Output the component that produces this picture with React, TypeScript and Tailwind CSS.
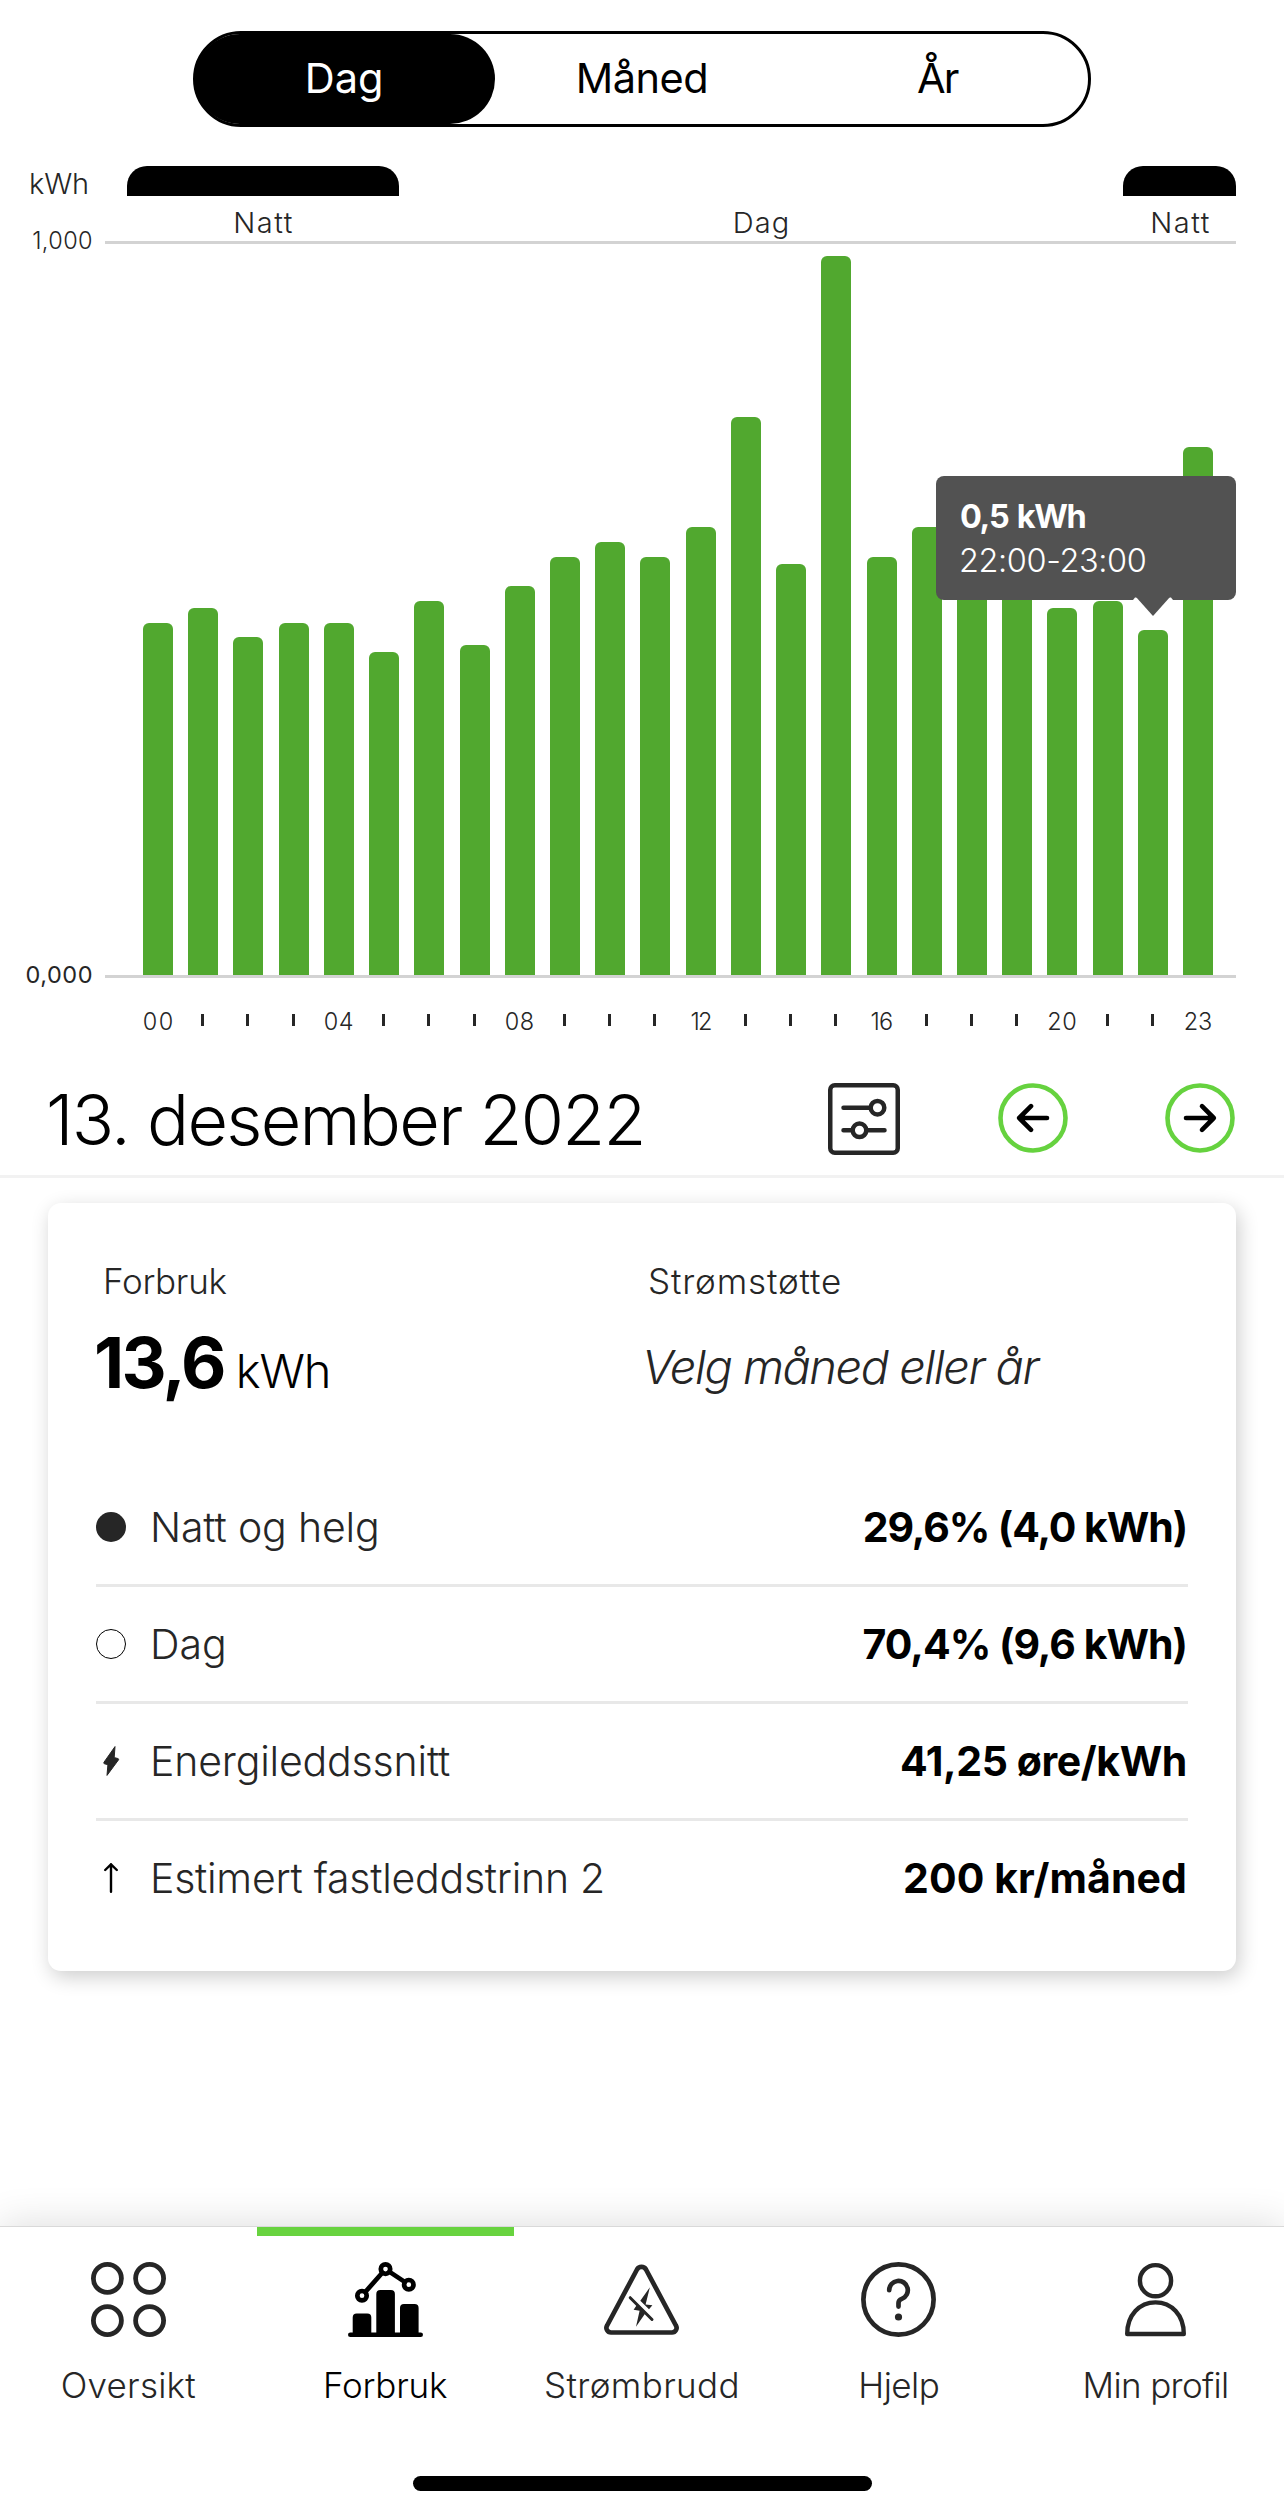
import React from 'react';
import clsx from 'clsx';

// kWh per hour, 00 - 23
const usage = [
  0.48, 0.5, 0.46, 0.48, 0.48, 0.44, 0.51, 0.45, 0.53, 0.57, 0.59, 0.57,
  0.61, 0.76, 0.56, 0.98, 0.57, 0.61, 0.56, 0.55, 0.5, 0.51, 0.47, 0.72,
];

const PLOT_HEIGHT = 734;

const hourLabels: Record<number, { text: string; className: string }> = {
  0: { text: '00', className: 'tracking-[1.6px] -mr-[1.6px]' },
  4: { text: '04', className: 'tracking-[0.6px]' },
  8: { text: '08', className: 'tracking-[0.6px]' },
  12: { text: '12', className: 'tracking-[-1.6px]' },
  16: { text: '16', className: 'tracking-[-0.8px]' },
  20: { text: '20', className: 'tracking-[0.6px]' },
  23: { text: '23', className: 'tracking-[0px]' },
};

const PeriodTabs: React.FC = () => (
  <div className="mx-auto grid h-24 w-[898px] grid-cols-3 rounded-full border-[3px] border-black text-[41.5px] leading-none text-black">
    <button className="-mr-0.5 -ml-px rounded-full bg-black pr-0.5 text-white">Dag</button>
    <button className="tracking-[-0.5px]">Måned</button>
    <button className="pr-1 tracking-[-1.8px]">År</button>
  </div>
);

const Tooltip: React.FC = () => (
  <div className="absolute top-[232px] right-0 flex h-[124px] w-[300px] flex-col rounded-lg bg-[#525252] pt-[19px] pl-6 text-[32.5px] leading-[44px] text-white">
    <span className="font-bold tracking-[-1.35px] [word-spacing:2px]">0,5 kWh</span>
    <span className="-ml-px font-light tracking-[-0.4px]">22:00-23:00</span>
    <svg className="absolute top-[121px] left-[197px]" width="40" height="20" viewBox="0 0 40 20">
      <path d="M0 3 2 .5h36L40 3Z" fill="#fff" />
      <path d="M3 0h34L20 19Z" fill="#525252" />
    </svg>
  </div>
);

const UsageChart: React.FC = () => (
  <section className="mt-[39px] font-light text-[#262626]">
    <div className="flex h-[30px]">
      <span className="w-[127px] pl-[29px] text-[29px] leading-[36px] tracking-[-0.17px]">kWh</span>
      <div className="w-[272px] rounded-t-[20px] bg-black" />
      <div className="w-[724px]" />
      <div className="w-[113px] rounded-t-[20px] bg-black" />
    </div>
    <div className="flex h-[45px] pl-[127px] text-center text-[29px] leading-[53px]">
      <span className="w-[272px] pl-px tracking-[1.5px]">Natt</span>
      <span className="w-[724px] pl-px tracking-[1.1px]">Dag</span>
      <span className="w-[113px] pl-0.5 tracking-[1.5px]">Natt</span>
    </div>

    <div className="flex">
      <div className="-mt-3 -mb-[9px] flex w-[105px] flex-col justify-between pr-3 text-right text-[23.5px] leading-6">
        <span className="tracking-[0.4px]">1,000</span>
        <span className="font-normal tracking-[0.5px]">0,000</span>
      </div>
      <div className="relative flex h-[737px] w-[1131px] items-end gap-[15.22px] border-y-[3px] border-[#d3d3d3] pl-[38px]">
        {usage.map((value, hour) => (
          <div
            key={hour}
            className="w-[30px] shrink-0 rounded-t-[6px] bg-[#51a82f]"
            style={{ height: Math.round(value * PLOT_HEIGHT) }}
          />
        ))}
        <Tooltip />
      </div>
    </div>

    <div className="flex h-[87px] items-center gap-[15.22px] pl-[143px] text-[23.5px]">
      {usage.map((_, hour) => (
        <div key={hour} className="flex w-[30px] shrink-0 justify-center">
          {hourLabels[hour] ? (
            <span className={hourLabels[hour].className}>{hourLabels[hour].text}</span>
          ) : (
            <span className="mr-px mb-[3px] h-3 w-[3px] bg-[#262626]" />
          )}
        </div>
      ))}
    </div>
  </section>
);

const SettingsIcon: React.FC = () => (
  <svg width="72" height="72" viewBox="0 0 72 72" fill="none" stroke="#262626" strokeWidth="4.5" strokeLinecap="round">
    <rect x="2.25" y="2.25" width="67.5" height="67.5" rx="4.5" />
    <path d="M15.5 24.7h26M15.5 47.3h8M39.5 47.3h17" />
    <circle cx="49.5" cy="24.7" r="6.8" />
    <circle cx="31.5" cy="47.3" r="6.8" />
  </svg>
);

const CircleArrow: React.FC<{ flipped?: boolean }> = ({ flipped }) => (
  <svg className={clsx('mb-0.5', flipped && '-scale-x-100')} width="70" height="70" viewBox="0 0 70 70" fill="none" strokeLinecap="round" strokeLinejoin="round">
    <circle cx="35" cy="35" r="32.5" stroke="#66d23f" strokeWidth="4.6" />
    <path d="M33 23.2 21.2 35 33 46.8M21.2 35H49" stroke="#000" strokeWidth="4.6" />
  </svg>
);

const DateBar: React.FC = () => (
  <div className="flex h-[113px] items-center border-b-[3px] border-[#f2f2f2] pr-[49px] pl-[46px]">
    <h1 className="flex-1 text-[70px] leading-none font-light tracking-[-1.72px] text-black">13. desember 2022</h1>
    <div className="flex items-center gap-[97.5px] pb-[3px]">
      <SettingsIcon />
      <CircleArrow />
      <CircleArrow flipped />
    </div>
  </div>
);

const BoltIcon: React.FC = () => (
  <svg width="30" height="30" viewBox="0 0 30 30" fill="#262626" stroke="#262626" strokeWidth="1" strokeLinejoin="round">
    <path d="M19 .6 8 16.2c-.5.8-.2 1.4.6 1.6l3.3.9L11 29.4 22.4 14c.5-.8.2-1.3-.6-1.5l-3.6-.9Z" />
  </svg>
);

const UpIcon: React.FC = () => (
  <svg width="30" height="30" viewBox="0 0 30 30" fill="none" stroke="#000" strokeWidth="2.4" strokeLinecap="round" strokeLinejoin="round">
    <path d="M15 28.8V1.3M9.2 7 15 1.3 20.8 7" />
  </svg>
);

const details = [
  { icon: <span className="size-[30px] rounded-full bg-[#262626]" />, label: 'Natt og helg', value: '29,6% (4,0 kWh)', labelClass: 'tracking-[-0.16px]', valueClass: 'tracking-[-1.09px]' },
  { icon: <span className="size-[30px] rounded-full border border-black" />, label: 'Dag', value: '70,4% (9,6 kWh)', labelClass: 'tracking-normal', valueClass: 'tracking-[-1px]' },
  { icon: <BoltIcon />, label: 'Energileddssnitt', value: '41,25 øre/kWh', labelClass: 'tracking-[-0.17px]', valueClass: 'tracking-[-0.4px]' },
  { icon: <UpIcon />, label: 'Estimert fastleddstrinn 2', value: '200 kr/måned', labelClass: 'tracking-[-0.25px]', valueClass: 'tracking-[0.08px]' },
];

const SummaryCard: React.FC = () => (
  <section className="mx-12 mt-[25px] h-[768px] rounded-[13px] bg-white px-12 pt-[58px] shadow-[3px_6px_20px_rgba(0,0,0,0.2)]">
    <div className="grid h-[209px] grid-cols-2">
      <div>
        <p className="pl-[7px] text-[35px] leading-10 font-light tracking-[-0.28px] text-[#262626]">Forbruk</p>
        <p className="mt-[22px] -ml-0.5 leading-[80px] text-black">
          <span className="text-[70px] font-bold tracking-[-2.74px]">13,6</span>
          <span className="ml-3 text-[47px] font-light tracking-[-1.1px]">kWh</span>
        </p>
      </div>
      <div>
        <p className="pl-1.5 text-[35px] leading-10 font-light tracking-[0.84px] text-[#262626]">Strømstøtte</p>
        <p className="mt-[26px] text-[47px] leading-[80px] font-light tracking-[-1.5px] text-[#262626] italic">Velg måned eller år</p>
      </div>
    </div>
    <ul>
      {details.map((item) => (
        <li key={item.label} className="flex h-[117px] items-center border-b-[3px] border-[#e8e8e8] text-[41px] leading-none last:border-transparent">
          {item.icon}
          <span className={clsx('ml-6 flex-1 font-light text-[#262626]', item.labelClass)}>{item.label}</span>
          <span className={clsx('pr-px font-bold text-black', item.valueClass)}>{item.value}</span>
        </li>
      ))}
    </ul>
  </section>
);

const OverviewIcon = (
  <g strokeWidth="4.8">
    <circle cx="16.4" cy="16.4" r="14" />
    <circle cx="58.6" cy="16.4" r="14" />
    <circle cx="16.4" cy="58.6" r="14" />
    <circle cx="58.6" cy="58.6" r="14" />
  </g>
);

const UsageIcon = (
  <g strokeWidth="4.7">
    <circle cx="14" cy="33.7" r="4.7" />
    <circle cx="37.5" cy="7.1" r="4.7" />
    <circle cx="60.8" cy="22.7" r="4.7" />
    <path d="m17.3 30 17-19.2M41.6 9.9l15.1 10" />
    <g fill="currentColor" stroke="none">
      <path d="M4.7 71V55.5a4 4 0 0 1 4-4h10.6a4 4 0 0 1 4 4V71ZM28.3 71V32a4 4 0 0 1 4-4h10.6a4 4 0 0 1 4 4v39ZM52 71V46a4 4 0 0 1 4-4h10.6a4 4 0 0 1 4 4v25Z" />
      <rect y="70.4" width="75" height="4.6" rx="2.3" />
    </g>
  </g>
);

const OutageIcon = (
  <g strokeWidth="4.7">
    <path d="M33 7.5a5.2 5.2 0 0 1 9 0L71.9 63.5a4.6 4.6 0 0 1-4 7H7.1a4.6 4.6 0 0 1-4-7Z" />
    <path d="M26.2 35.7 48 57.5" strokeWidth="3" />
    <g fill="currentColor" stroke="none">
      <path d="M45.9 25.3 36.3 38.7 45 47.3l3.4-4-6.8-.9Z" />
      <path d="m33 42.7-3.4 5 6 1L32 64.7l9-13Z" />
    </g>
  </g>
);

const HelpIcon = (
  <g strokeWidth="4.7">
    <circle cx="37.5" cy="37.5" r="35.1" />
    <path d="M28.2 28.2a9.3 9.3 0 1 1 12.6 8.7c-2.1.8-3.3 2-3.3 4v3.7" />
    <circle cx="37.5" cy="55" r="3.6" fill="currentColor" stroke="none" />
  </g>
);

const ProfileIcon = (
  <g strokeWidth="4.4">
    <circle cx="37.5" cy="18.7" r="15.6" />
    <path d="M9.2 72c0-19 12.3-31.6 28.3-31.6S65.8 53 65.8 72Z" />
  </g>
);

const navItems = [
  { label: 'Oversikt', icon: OverviewIcon, className: 'tracking-[0.22px]' },
  { label: 'Forbruk', icon: UsageIcon, className: 'tracking-[-0.19px]', active: true },
  { label: 'Strømbrudd', icon: OutageIcon, className: 'tracking-[0.37px]' },
  { label: 'Hjelp', icon: HelpIcon, className: 'tracking-[-0.52px]' },
  { label: 'Min profil', icon: ProfileIcon, className: 'tracking-[-0.63px]' },
];

const BottomNav: React.FC = () => (
  <nav className="mt-[255px] h-[289px] border-t border-[#d9d9d9] bg-white shadow-[0_-4px_36px_rgba(0,0,0,0.12)]">
    <div className="flex">
      {navItems.map((item) => (
        <a key={item.label} className={clsx('flex flex-1 flex-col items-center', item.active ? 'text-black' : 'text-[#262626]')}>
          <span className={clsx('h-[9px] w-full', item.active && 'bg-[#68d33f]')} />
          <svg className="mt-[26px]" width="75" height="75" viewBox="0 0 75 75" fill="none" stroke="currentColor" strokeLinecap="round" strokeLinejoin="round">
            {item.icon}
          </svg>
          <span className={clsx('mt-[23px] text-[35px] leading-[50px] font-light', item.className)}>{item.label}</span>
        </a>
      ))}
    </div>
    <div className="mx-auto mt-[66px] h-[15px] w-[459px] rounded-full bg-black" />
  </nav>
);

export default function App() {
  return (
    <main className="h-[2515px] w-[1284px] overflow-hidden bg-white pt-[31px] font-['Inter',sans-serif]">
      <PeriodTabs />
      <UsageChart />
      <DateBar />
      <SummaryCard />
      <BottomNav />
    </main>
  );
}
